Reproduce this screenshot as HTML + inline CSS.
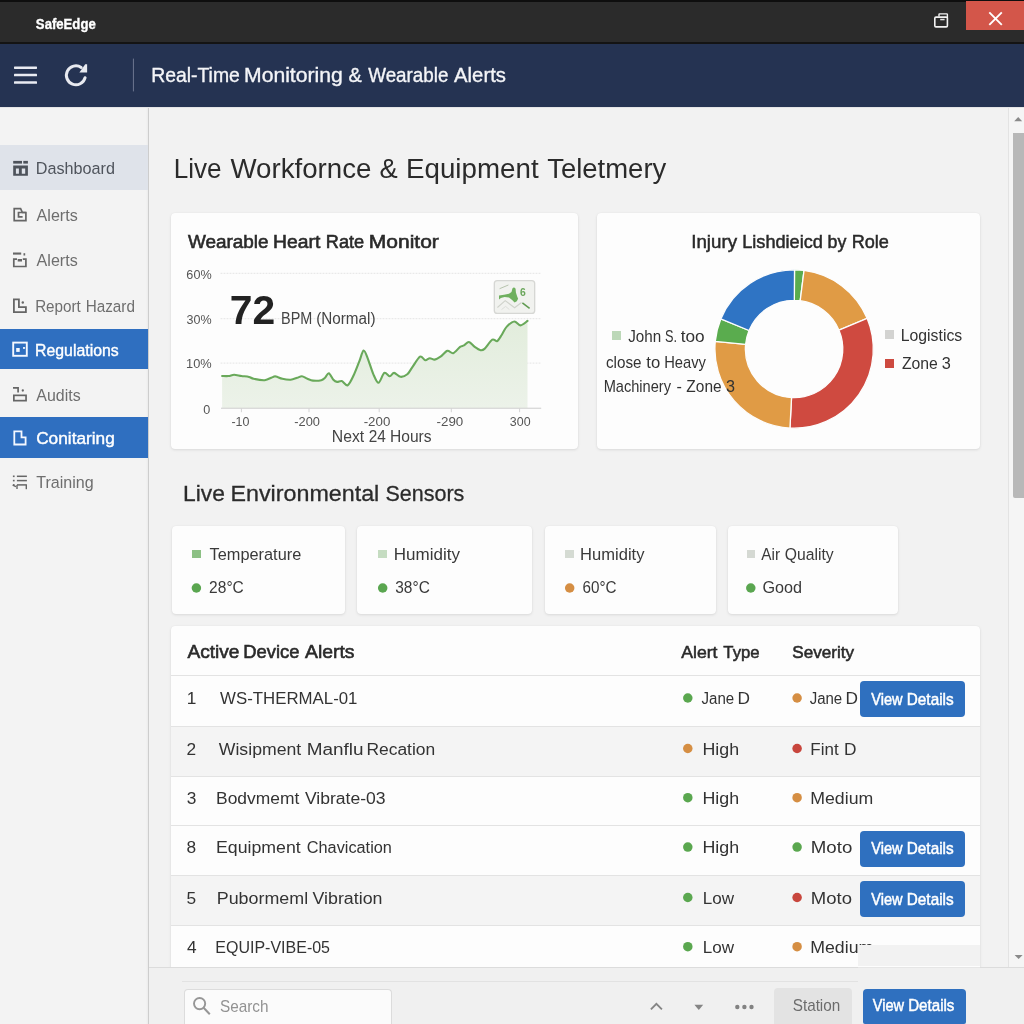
<!DOCTYPE html>
<html><head><meta charset="utf-8"><title>SafeEdge</title>
<style>
html,body{margin:0;padding:0;width:1024px;height:1024px;overflow:hidden;}
body{position:relative;background:#f2f2f2;font-family:"Liberation Sans",sans-serif;}
.t{position:absolute;white-space:nowrap;transform-origin:0 50%;}
.r{position:absolute;}
#tx{position:absolute;left:0;top:0;width:1024px;height:1024px;will-change:transform;}
</style></head><body>
<div class="r" style="left:0.00px;top:0.00px;width:1024.00px;height:1024.00px;background:#f2f2f2;"></div>
<div class="r" style="left:0.00px;top:0.00px;width:1024.00px;height:43.50px;background:#2b2b2b;"></div>
<div class="r" style="left:0.00px;top:0.00px;width:1024.00px;height:1.60px;background:#0e0e0e;"></div>
<div class="r" style="left:0.00px;top:42.20px;width:1024.00px;height:1.60px;background:#141414;"></div>
<div class="r" style="left:965.70px;top:1.20px;width:58.30px;height:29.20px;background:#d3564a;"></div>
<div class="r" style="left:0.00px;top:43.50px;width:1024.00px;height:63.30px;background:#253352;"></div>
<div class="r" style="left:0.00px;top:106.80px;width:148.40px;height:917.20px;background:#f3f3f3;"></div>
<div class="r" style="left:145.60px;top:106.80px;width:2.60px;height:917.20px;background:linear-gradient(to right,rgba(0,0,0,0),rgba(0,0,0,0.035));"></div>
<div class="r" style="left:148.00px;top:106.80px;width:1.10px;height:917.20px;background:#cdcdcd;"></div>
<div class="r" style="left:0.00px;top:106.80px;width:1024.00px;height:1.50px;background:#e4e4e6;"></div>
<div class="r" style="left:0.00px;top:145.30px;width:148.00px;height:44.50px;background:#dfe3ea;"></div>
<div class="r" style="left:0.00px;top:328.80px;width:148.00px;height:39.80px;background:#2f6fc0;"></div>
<div class="r" style="left:0.00px;top:416.90px;width:148.00px;height:41.50px;background:#2f6fc0;"></div>
<div class="r" style="left:1008.40px;top:108.00px;width:1.00px;height:859.00px;background:#e3e3e3;"></div>
<div class="r" style="left:1009.40px;top:108.00px;width:14.60px;height:859.00px;background:#f5f5f5;"></div>
<div class="r" style="left:1013.20px;top:133.10px;width:10.80px;height:364.70px;background:#b8b8b8;border-radius:0 0 0 2px;"></div>
<div class="r" style="left:171.00px;top:213.00px;width:406.70px;height:235.50px;background:#fdfdfd;box-shadow:0 1px 3px rgba(0,0,0,0.10),0 0 1px rgba(0,0,0,0.08);border-radius:4px;"></div>
<div class="r" style="left:597.30px;top:213.00px;width:382.70px;height:235.50px;background:#fdfdfd;box-shadow:0 1px 3px rgba(0,0,0,0.10),0 0 1px rgba(0,0,0,0.08);border-radius:4px;"></div>
<div class="r" style="left:171.70px;top:526.30px;width:173.30px;height:87.30px;background:#fdfdfd;box-shadow:0 1px 3px rgba(0,0,0,0.10),0 0 1px rgba(0,0,0,0.08);border-radius:4px;"></div>
<div class="r" style="left:356.80px;top:526.30px;width:175.60px;height:87.30px;background:#fdfdfd;box-shadow:0 1px 3px rgba(0,0,0,0.10),0 0 1px rgba(0,0,0,0.08);border-radius:4px;"></div>
<div class="r" style="left:545.00px;top:526.30px;width:170.70px;height:87.30px;background:#fdfdfd;box-shadow:0 1px 3px rgba(0,0,0,0.10),0 0 1px rgba(0,0,0,0.08);border-radius:4px;"></div>
<div class="r" style="left:727.60px;top:526.30px;width:170.30px;height:87.30px;background:#fdfdfd;box-shadow:0 1px 3px rgba(0,0,0,0.10),0 0 1px rgba(0,0,0,0.08);border-radius:4px;"></div>
<div class="r" style="left:171.10px;top:626.40px;width:809.00px;height:345.00px;background:#fdfdfd;box-shadow:0 1px 3px rgba(0,0,0,0.10),0 0 1px rgba(0,0,0,0.08);border-radius:4px;"></div>
<div class="r" style="left:171.10px;top:726.00px;width:809.00px;height:50.00px;background:#f4f4f4;"></div>
<div class="r" style="left:171.10px;top:875.00px;width:809.00px;height:50.00px;background:#f4f4f4;"></div>
<div class="r" style="left:171.10px;top:675.00px;width:809.00px;height:1.00px;background:#e3e3e3;"></div>
<div class="r" style="left:171.10px;top:726.00px;width:809.00px;height:1.00px;background:#e3e3e3;"></div>
<div class="r" style="left:171.10px;top:776.00px;width:809.00px;height:1.00px;background:#e3e3e3;"></div>
<div class="r" style="left:171.10px;top:825.00px;width:809.00px;height:1.00px;background:#e3e3e3;"></div>
<div class="r" style="left:171.10px;top:875.00px;width:809.00px;height:1.00px;background:#e3e3e3;"></div>
<div class="r" style="left:171.10px;top:925.00px;width:809.00px;height:1.00px;background:#e3e3e3;"></div>
<div class="r" style="left:149.20px;top:967.20px;width:874.80px;height:56.80px;background:#f0f0f0;"></div>
<div class="r" style="left:149.20px;top:966.50px;width:874.80px;height:1.20px;background:#dcdcdc;"></div>
<div class="r" style="left:182.00px;top:980.60px;width:676.20px;height:1.20px;background:#e2e2e2;"></div>
<div class="r" style="left:184.40px;top:989.40px;width:207.20px;height:34.60px;background:#fbfbfb;border:1px solid #dcdcdc;border-bottom:none;border-radius:4px 4px 0 0;box-sizing:border-box;"></div>
<div class="r" style="left:774.40px;top:987.60px;width:78.00px;height:36.40px;background:#e3e3e3;border-radius:4px 4px 0 0;"></div>
<div class="r" style="left:862.70px;top:989.00px;width:103.50px;height:35.00px;background:#2f70bf;border-radius:4px 4px 2px 2px;"></div>
<svg class="r" style="left:0;top:0;will-change:transform" width="1024" height="1024" viewBox="0 0 1024 1024"><circle cx="196.40" cy="588" r="4.75" fill="#5aa650"/><circle cx="382.70" cy="588" r="4.75" fill="#5aa650"/><circle cx="569.70" cy="588" r="4.75" fill="#d58e43"/><circle cx="750.80" cy="588" r="4.75" fill="#5aa650"/><circle cx="687.80" cy="698.00" r="4.75" fill="#5aa74f"/><circle cx="797.10" cy="698.00" r="4.75" fill="#d58e43"/><circle cx="687.80" cy="748.50" r="4.75" fill="#d58e43"/><circle cx="797.10" cy="748.50" r="4.75" fill="#c8463d"/><circle cx="687.80" cy="797.70" r="4.75" fill="#5aa74f"/><circle cx="797.10" cy="797.70" r="4.75" fill="#d58e43"/><circle cx="687.80" cy="847.10" r="4.75" fill="#5aa74f"/><circle cx="797.10" cy="847.10" r="4.75" fill="#5aa74f"/><circle cx="687.80" cy="897.50" r="4.75" fill="#5aa74f"/><circle cx="797.10" cy="897.50" r="4.75" fill="#c8463d"/><circle cx="687.80" cy="946.70" r="4.75" fill="#5aa74f"/><circle cx="797.10" cy="946.70" r="4.75" fill="#d58e43"/><rect x="14" y="66.45" width="23" height="2.5" rx="0.6" fill="#e9ebf2"/><rect x="14" y="73.85" width="23" height="2.5" rx="0.6" fill="#e9ebf2"/><rect x="14" y="81.35" width="23" height="2.5" rx="0.6" fill="#e9ebf2"/><path d="M81.2 67.4 A9.5 9.5 0 1 0 85.1 77.7" fill="none" stroke="#e8eaf0" stroke-width="3" stroke-linecap="round"/><path d="M79.4 72.4 L87.1 72.4 L87.1 64.3 L85.2 64.3 Z" fill="#e8eaf0"/><rect x="132.9" y="58.6" width="1.1" height="32.8" fill="#66708a"/><rect x="934.8" y="17.1" width="12.6" height="9.8" fill="none" stroke="#f2f2f2" stroke-width="1.6" rx="1.2"/><path d="M939 16.6 V14.3 Q939 13.9 939.6 13.9 H946.6 Q947.4 13.9 947.4 14.6 V18" fill="none" stroke="#f2f2f2" stroke-width="1.4"/><rect x="940.2" y="18.8" width="4.4" height="1.5" fill="#e0e0e0"/><path d="M989.3 12.4 L1001.8 24.8 M1001.8 12.4 L989.3 24.8" stroke="#fff" stroke-width="1.9" fill="none"/><path d="M1014.2 121.3 L1018.2 117 L1022.2 121.3 Z" fill="#8a8a8a"/><path d="M1014.6 954.9 L1018.6 959.1 L1022.6 954.9 Z" fill="#8a8a8a"/><line x1="220.6" y1="273.3" x2="541" y2="273.3" stroke="#e4e4e4" stroke-width="1" stroke-dasharray="1.8 1.2"/><line x1="220.6" y1="318.7" x2="541" y2="318.7" stroke="#e4e4e4" stroke-width="1" stroke-dasharray="1.8 1.2"/><line x1="220.6" y1="363.1" x2="541" y2="363.1" stroke="#e4e4e4" stroke-width="1" stroke-dasharray="1.8 1.2"/><defs><linearGradient id="ag" x1="0" y1="320" x2="0" y2="408" gradientUnits="userSpaceOnUse"><stop offset="0" stop-color="#e2eddc"/><stop offset="1" stop-color="#ecf2e9"/></linearGradient></defs><path d="M222.1 376.0 C223.1 376.0 226.8 376.2 228.6 376.0 C230.4 375.8 232.2 374.7 234.1 374.7 C236.0 374.7 239.3 375.7 241.5 376.0 C243.7 376.3 247.2 376.5 249.0 376.9 C250.8 377.3 251.3 378.3 253.6 378.8 C255.9 379.3 261.8 380.5 264.7 380.2 C267.6 379.9 271.4 377.4 273.1 376.9 C274.8 376.4 274.6 376.2 276.0 376.5 C277.4 376.8 280.2 378.3 282.4 378.8 C284.6 379.3 288.5 379.8 290.7 379.7 C292.9 379.6 295.6 378.3 297.2 377.8 C298.8 377.3 300.4 376.1 301.9 376.2 C303.4 376.3 305.8 378.2 307.4 378.8 C309.0 379.4 311.0 380.4 313.0 380.6 C315.0 380.8 319.5 380.6 321.3 380.2 C323.1 379.8 323.9 378.8 325.0 377.8 C326.1 376.8 327.6 372.9 328.8 373.2 C330.0 373.5 332.2 378.4 333.4 379.7 C334.6 381.0 335.9 381.7 337.1 381.9 C338.3 382.1 340.2 380.5 341.8 381.0 C343.4 381.5 345.9 386.2 347.7 385.3 C349.5 384.4 352.1 378.5 353.8 375.0 C355.5 371.5 358.0 364.7 359.4 361.1 C360.8 357.5 362.4 351.0 363.6 350.6 C364.8 350.2 366.3 354.9 367.7 358.3 C369.1 361.7 371.7 370.5 373.3 374.1 C374.9 377.7 376.9 383.0 378.5 382.8 C380.1 382.6 382.6 373.9 384.3 372.9 C386.0 371.9 388.4 376.2 389.8 376.2 C391.2 376.2 392.5 372.8 394.1 372.9 C395.7 373.0 398.6 376.6 400.5 376.8 C402.4 377.0 405.6 375.7 407.3 374.3 C409.0 372.9 410.3 370.0 412.2 367.4 C414.1 364.8 418.1 357.8 420.0 356.7 C421.9 355.6 423.9 360.0 425.3 360.2 C426.7 360.4 428.4 358.3 429.8 358.2 C431.2 358.1 433.1 359.8 434.7 359.6 C436.3 359.4 438.6 358.0 440.5 356.7 C442.4 355.4 445.5 351.3 447.4 350.8 C449.3 350.3 451.3 353.8 453.2 353.2 C455.1 352.6 458.5 348.0 460.1 346.9 C461.7 345.8 462.7 346.1 464.0 345.4 C465.3 344.7 467.3 341.8 468.9 342.0 C470.5 342.2 473.0 345.7 474.7 346.9 C476.4 348.1 479.2 349.9 480.6 350.2 C482.0 350.5 482.8 350.4 484.5 348.9 C486.2 347.4 490.4 340.8 492.3 339.7 C494.2 338.6 495.9 341.8 497.2 341.1 C498.5 340.4 500.1 337.4 501.5 335.2 C502.9 333.0 505.1 328.4 507.0 326.4 C508.9 324.4 512.4 321.6 514.4 321.5 C516.4 321.4 518.7 325.5 520.6 325.4 C522.5 325.3 526.5 321.6 527.5 320.9 L527.5 408 L222.1 408 Z" fill="url(#ag)"/><path d="M222.1 376.0 C223.1 376.0 226.8 376.2 228.6 376.0 C230.4 375.8 232.2 374.7 234.1 374.7 C236.0 374.7 239.3 375.7 241.5 376.0 C243.7 376.3 247.2 376.5 249.0 376.9 C250.8 377.3 251.3 378.3 253.6 378.8 C255.9 379.3 261.8 380.5 264.7 380.2 C267.6 379.9 271.4 377.4 273.1 376.9 C274.8 376.4 274.6 376.2 276.0 376.5 C277.4 376.8 280.2 378.3 282.4 378.8 C284.6 379.3 288.5 379.8 290.7 379.7 C292.9 379.6 295.6 378.3 297.2 377.8 C298.8 377.3 300.4 376.1 301.9 376.2 C303.4 376.3 305.8 378.2 307.4 378.8 C309.0 379.4 311.0 380.4 313.0 380.6 C315.0 380.8 319.5 380.6 321.3 380.2 C323.1 379.8 323.9 378.8 325.0 377.8 C326.1 376.8 327.6 372.9 328.8 373.2 C330.0 373.5 332.2 378.4 333.4 379.7 C334.6 381.0 335.9 381.7 337.1 381.9 C338.3 382.1 340.2 380.5 341.8 381.0 C343.4 381.5 345.9 386.2 347.7 385.3 C349.5 384.4 352.1 378.5 353.8 375.0 C355.5 371.5 358.0 364.7 359.4 361.1 C360.8 357.5 362.4 351.0 363.6 350.6 C364.8 350.2 366.3 354.9 367.7 358.3 C369.1 361.7 371.7 370.5 373.3 374.1 C374.9 377.7 376.9 383.0 378.5 382.8 C380.1 382.6 382.6 373.9 384.3 372.9 C386.0 371.9 388.4 376.2 389.8 376.2 C391.2 376.2 392.5 372.8 394.1 372.9 C395.7 373.0 398.6 376.6 400.5 376.8 C402.4 377.0 405.6 375.7 407.3 374.3 C409.0 372.9 410.3 370.0 412.2 367.4 C414.1 364.8 418.1 357.8 420.0 356.7 C421.9 355.6 423.9 360.0 425.3 360.2 C426.7 360.4 428.4 358.3 429.8 358.2 C431.2 358.1 433.1 359.8 434.7 359.6 C436.3 359.4 438.6 358.0 440.5 356.7 C442.4 355.4 445.5 351.3 447.4 350.8 C449.3 350.3 451.3 353.8 453.2 353.2 C455.1 352.6 458.5 348.0 460.1 346.9 C461.7 345.8 462.7 346.1 464.0 345.4 C465.3 344.7 467.3 341.8 468.9 342.0 C470.5 342.2 473.0 345.7 474.7 346.9 C476.4 348.1 479.2 349.9 480.6 350.2 C482.0 350.5 482.8 350.4 484.5 348.9 C486.2 347.4 490.4 340.8 492.3 339.7 C494.2 338.6 495.9 341.8 497.2 341.1 C498.5 340.4 500.1 337.4 501.5 335.2 C502.9 333.0 505.1 328.4 507.0 326.4 C508.9 324.4 512.4 321.6 514.4 321.5 C516.4 321.4 518.7 325.5 520.6 325.4 C522.5 325.3 526.5 321.6 527.5 320.9" fill="none" stroke="#69a95a" stroke-width="2.1" stroke-linejoin="round" stroke-linecap="round"/><rect x="221" y="407.7" width="320.2" height="1.1" fill="#d2d2d2"/><rect x="240.9" y="408" width="1" height="4.2" fill="#d4d4d4"/><rect x="308.5" y="408" width="1" height="4.2" fill="#d4d4d4"/><rect x="378.7" y="408" width="1" height="4.2" fill="#d4d4d4"/><rect x="450.8" y="408" width="1" height="4.2" fill="#d4d4d4"/><rect x="519.1" y="408" width="1" height="4.2" fill="#d4d4d4"/><rect x="494.3" y="280.6" width="40.4" height="32.8" rx="3" fill="#f1f2ef" stroke="#d6d7d4" stroke-width="1.3"/><path d="M499 295.6 L504 294.7 L509 293.7 L511.5 291.9 L512.4 288.4 Q514 286.6 515.6 288.7 L515.9 292.5 L517.1 296.2 L518.1 298.7 L516.8 301.2 L514.6 302.5 L512.1 300 L509 297.5 L504.6 296.9 L500.9 298.1 L499 299.4 Z" fill="#6fb05f"/><path d="M497.4 307.5 L505.2 300.6 L514.6 307.8 L521.5 302.5" fill="none" stroke="#cfd2cb" stroke-width="1.1"/><path d="M501.5 309.6 L505.6 306.4 L509.4 309.6" fill="none" stroke="#dcdeda" stroke-width="1"/><path d="M522.4 302.8 L529.6 308.4" stroke="#5f9a50" stroke-width="1.5"/><path d="M499.6 288.7 L508.4 285" stroke="#b7c4ae" stroke-width="1"/><text x="520" y="295.8" font-family="Liberation Sans" font-weight="700" font-size="10.4" fill="#6aa65b">6</text><path d="M794.51 269.80 A79.2 79.2 0 0 1 804.03 270.42 L800.20 300.68 A48.7 48.7 0 0 0 794.35 300.30 Z" fill="#5aac4e" stroke="#fdfdfd" stroke-width="1.3"/><path d="M804.03 270.42 A79.2 79.2 0 0 1 867.11 318.31 L838.99 330.13 A48.7 48.7 0 0 0 800.20 300.68 Z" fill="#e09b45" stroke="#fdfdfd" stroke-width="1.3"/><path d="M867.11 318.31 A79.2 79.2 0 0 1 789.95 428.09 L791.55 397.63 A48.7 48.7 0 0 0 838.99 330.13 Z" fill="#cf4a40" stroke="#fdfdfd" stroke-width="1.3"/><path d="M789.95 428.09 A79.2 79.2 0 0 1 715.26 341.41 L745.62 344.33 A48.7 48.7 0 0 0 791.55 397.63 Z" fill="#e09b45" stroke="#fdfdfd" stroke-width="1.3"/><path d="M715.26 341.41 A79.2 79.2 0 0 1 720.82 318.95 L749.04 330.52 A48.7 48.7 0 0 0 745.62 344.33 Z" fill="#5aac4e" stroke="#fdfdfd" stroke-width="1.3"/><path d="M720.82 318.95 A79.2 79.2 0 0 1 794.51 269.80 L794.35 300.30 A48.7 48.7 0 0 0 749.04 330.52 Z" fill="#2f74c4" stroke="#fdfdfd" stroke-width="1.3"/><rect x="13.2" y="160.9" width="8.8" height="2.7" fill="#4e535b"/><rect x="23.3" y="160.9" width="4.6" height="2.7" fill="#4e535b"/><path fill-rule="evenodd" d="M13.2 165.6 H27.9 V175.8 H13.2 Z M15.9 168.4 V173.8 H18.9 V168.4 Z M21.8 168.4 V173.8 H25.2 V168.4 Z" fill="#4e535b"/><path d="M14.2 208.6 H20.6 L22.4 212.5 H25.9 V220.7 H14.2 Z" fill="none" stroke="#666" stroke-width="1.7"/><path d="M25.9 212.5 H18.5 V216.8 H22.6" fill="none" stroke="#666" stroke-width="1.7"/><rect x="13" y="252.5" width="8.2" height="2.1" fill="#666"/><rect x="23.5" y="253.2" width="1.7" height="2.3" fill="#666"/><path d="M17 259.2 H13.8 V266.5 H25.9 V259.2 H22.8" fill="none" stroke="#666" stroke-width="1.7"/><rect x="17.7" y="259" width="4.3" height="2.5" fill="#666"/><path d="M13.9 299.4 H18.9 V307.2 H25.9 V312.2 H13.9 Z" fill="none" stroke="#666" stroke-width="1.8"/><circle cx="22.8" cy="302.5" r="1.2" fill="#666"/><rect x="13.2" y="342.6" width="13.6" height="13.2" fill="none" stroke="#f4f8ff" stroke-width="1.9"/><rect x="16.2" y="348" width="3.5" height="3.9" fill="#f4f8ff"/><rect x="23" y="347.1" width="2.1" height="1.7" fill="#f4f8ff"/><path d="M13 387.8 H18.1 V392.5" fill="none" stroke="#666" stroke-width="1.7"/><circle cx="22.8" cy="390.5" r="1.15" fill="#666"/><rect x="13.85" y="395.35" width="12.2" height="5.3" fill="none" stroke="#666" stroke-width="1.7"/><path d="M14.3 431.4 H21.5 V437.3 H25.6 V444.5 H14.3 Z" fill="none" stroke="#f4f8ff" stroke-width="1.8"/><rect x="12.9" y="475.5" width="1.7" height="1.6" fill="#666"/><rect x="16.9" y="475.55" width="10" height="1.5" fill="#666"/><rect x="12.9" y="479.8" width="1.7" height="1.6" fill="#666"/><rect x="16.9" y="479.85" width="10" height="1.5" fill="#666"/><rect x="12.9" y="484.09999999999997" width="1.7" height="1.6" fill="#666"/><rect x="16.9" y="484.15" width="10" height="1.5" fill="#666"/><rect x="25.6" y="485" width="1.4" height="4.2" fill="#666"/><rect x="16.3" y="485" width="1.4" height="4" fill="#666"/><rect x="13" y="484.5" width="3.6" height="1.4" fill="#666" transform="rotate(25 13 484.5)"/><path d="M650.9 1009.4 L656.4 1003.9 L661.9 1009.4" fill="none" stroke="#858585" stroke-width="1.9"/><path d="M694.4 1004.7 L703.2 1004.7 L698.8 1009.9 Z" fill="#858585"/><circle cx="737.3" cy="1007" r="2.2" fill="#828282"/><circle cx="744.4" cy="1007" r="2.2" fill="#828282"/><circle cx="751.5" cy="1007" r="2.2" fill="#828282"/><circle cx="199.6" cy="1003.6" r="5.6" fill="none" stroke="#969696" stroke-width="1.9"/><path d="M203.6 1007.8 L209.8 1014.2" stroke="#969696" stroke-width="2"/></svg>
<div id="tx">
<div class="t" style="left:35px;top:17px;font-size:13.8px;line-height:15px;color:#fff;font-weight:700;transform:translateX(0.87px) scaleX(0.9517);-webkit-text-stroke:0.35px #fff;">SafeEdge</div>
<div class="t" style="left:151px;top:64px;font-size:19.9px;line-height:22px;color:#f4f5f8;transform:translateX(0.15px) scaleX(0.9746);-webkit-text-stroke:0.35px #f4f5f8;">Real-Time</div>
<div class="t" style="left:244px;top:64px;font-size:19.9px;line-height:22px;color:#f4f5f8;transform:translateX(0.01px) scaleX(1.0638);-webkit-text-stroke:0.35px #f4f5f8;">Monitoring</div>
<div class="t" style="left:348px;top:64px;font-size:19.9px;line-height:22px;color:#f4f5f8;transform:translateX(0.50px);-webkit-text-stroke:0.35px #f4f5f8;">&amp;</div>
<div class="t" style="left:368px;top:64px;font-size:19.9px;line-height:22px;color:#f4f5f8;transform:translateX(0.25px) scaleX(0.9449);-webkit-text-stroke:0.35px #f4f5f8;">Wearable</div>
<div class="t" style="left:454px;top:64px;font-size:19.9px;line-height:22px;color:#f4f5f8;transform:translateX(0.10px) scaleX(1.0190);-webkit-text-stroke:0.35px #f4f5f8;">Alerts</div>
<div class="t" style="left:35px;top:159px;font-size:16.8px;line-height:19px;color:#4f545c;transform:translateX(0.70px) scaleX(0.9649);">Dashboard</div>
<div class="t" style="left:36px;top:206px;font-size:16.8px;line-height:19px;color:#6e6e6e;transform:translateX(0.60px) scaleX(0.9590);">Alerts</div>
<div class="t" style="left:36px;top:251px;font-size:16.8px;line-height:19px;color:#6e6e6e;transform:translateX(0.60px) scaleX(0.9590);">Alerts</div>
<div class="t" style="left:35px;top:297px;font-size:16.8px;line-height:19px;color:#6e6e6e;transform:translateX(0.13px) scaleX(0.9061);">Report</div>
<div class="t" style="left:85px;top:297px;font-size:16.8px;line-height:19px;color:#6e6e6e;transform:translateX(0.68px) scaleX(0.9107);">Hazard</div>
<div class="t" style="left:35px;top:341px;font-size:16.8px;line-height:19px;color:#fff;transform:translateX(0.08px) scaleX(0.9433);-webkit-text-stroke:0.4px #fff;">Regulations</div>
<div class="t" style="left:36px;top:386px;font-size:16.8px;line-height:19px;color:#6e6e6e;transform:translateX(0.35px) scaleX(0.9487);">Audits</div>
<div class="t" style="left:36px;top:429px;font-size:16.8px;line-height:19px;color:#fff;transform:translateX(0.14px) scaleX(1.0284);-webkit-text-stroke:0.4px #fff;">Conitaring</div>
<div class="t" style="left:36px;top:473px;font-size:16.8px;line-height:19px;color:#6e6e6e;transform:translateX(0.28px) scaleX(0.9571);">Training</div>
<div class="t" style="left:173px;top:153px;font-size:27.3px;line-height:31px;color:#2b2b2b;transform:translateX(0.71px) scaleX(0.9547);">Live</div>
<div class="t" style="left:230px;top:153px;font-size:27.3px;line-height:31px;color:#2b2b2b;transform:translateX(0.40px) scaleX(1.0138);">Workfornce</div>
<div class="t" style="left:379px;top:153px;font-size:27.3px;line-height:31px;color:#2b2b2b;transform:translateX(0.54px);">&amp;</div>
<div class="t" style="left:406px;top:153px;font-size:27.3px;line-height:31px;color:#2b2b2b;transform:translateX(0.03px) scaleX(1.0159);">Equipment</div>
<div class="t" style="left:547px;top:153px;font-size:27.3px;line-height:31px;color:#2b2b2b;transform:translateX(0.25px) scaleX(1.0059);">Teletmery</div>
<div class="t" style="left:187px;top:231px;font-size:18.8px;line-height:21px;color:#2a2a2a;transform:translateX(0.90px) scaleX(1.0077);-webkit-text-stroke:0.6px #2a2a2a;">Wearable</div>
<div class="t" style="left:273px;top:231px;font-size:18.8px;line-height:21px;color:#2a2a2a;transform:translateX(0.05px) scaleX(1.0278);-webkit-text-stroke:0.6px #2a2a2a;">Heart</div>
<div class="t" style="left:325px;top:231px;font-size:18.8px;line-height:21px;color:#2a2a2a;transform:translateX(0.84px) scaleX(0.9676);-webkit-text-stroke:0.6px #2a2a2a;">Rate</div>
<div class="t" style="left:368px;top:231px;font-size:18.8px;line-height:21px;color:#2a2a2a;transform:translateX(0.82px) scaleX(1.1180);-webkit-text-stroke:0.6px #2a2a2a;">Monitor</div>
<div class="t" style="left:691px;top:231px;font-size:18.6px;line-height:21px;color:#2a2a2a;transform:translateX(0.21px) scaleX(1.0068);-webkit-text-stroke:0.5px #2a2a2a;">Injury</div>
<div class="t" style="left:742px;top:231px;font-size:18.6px;line-height:21px;color:#2a2a2a;transform:translateX(0.20px) scaleX(0.9760);-webkit-text-stroke:0.5px #2a2a2a;">Lishdieicd</div>
<div class="t" style="left:827px;top:231px;font-size:18.6px;line-height:21px;color:#2a2a2a;transform:translateX(0.53px) scaleX(0.9564);-webkit-text-stroke:0.5px #2a2a2a;">by</div>
<div class="t" style="left:851px;top:231px;font-size:18.6px;line-height:21px;color:#2a2a2a;transform:translateX(0.65px) scaleX(0.9752);-webkit-text-stroke:0.5px #2a2a2a;">Role</div>
<div class="t" style="left:186px;top:267px;font-size:12.8px;line-height:15px;color:#555;transform:translateX(0.37px) scaleX(0.9873);">60%</div>
<div class="t" style="left:186px;top:312px;font-size:12.8px;line-height:15px;color:#555;transform:translateX(0.56px) scaleX(0.9796);">30%</div>
<div class="t" style="left:186px;top:356px;font-size:12.8px;line-height:15px;color:#555;transform:translateX(0.04px);">10%</div>
<div class="t" style="left:203px;top:403px;font-size:12.6px;line-height:14px;color:#555;transform:translateX(0.31px);">0</div>
<div class="t" style="left:231px;top:415px;font-size:12.4px;line-height:14px;color:#555;transform:translateX(0.45px) scaleX(1.0066);">-10</div>
<div class="t" style="left:294px;top:415px;font-size:12.4px;line-height:14px;color:#555;transform:translateX(0.34px) scaleX(1.0348);">-200</div>
<div class="t" style="left:363px;top:415px;font-size:12.4px;line-height:14px;color:#555;transform:translateX(0.67px) scaleX(1.0725);">-200</div>
<div class="t" style="left:436px;top:415px;font-size:12.4px;line-height:14px;color:#555;transform:translateX(0.57px) scaleX(1.0767);">-290</div>
<div class="t" style="left:509px;top:415px;font-size:12.4px;line-height:14px;color:#555;transform:translateX(0.87px);">300</div>
<div class="t" style="left:229px;top:287px;font-size:40.8px;line-height:46px;color:#222;font-weight:700;transform:translateX(0.77px);">7</div>
<div class="t" style="left:252px;top:287px;font-size:40.8px;line-height:46px;color:#222;font-weight:700;transform:translateX(0.38px);">2</div>
<div class="t" style="left:281px;top:310px;font-size:15.6px;line-height:17px;color:#444;transform:translateX(0.05px) scaleX(0.9249);">BPM</div>
<div class="t" style="left:316px;top:310px;font-size:15.6px;line-height:17px;color:#444;transform:translateX(0.18px) scaleX(0.9777);">(Normal)</div>
<div class="t" style="left:331px;top:428px;font-size:15.8px;line-height:17px;color:#444;transform:translateX(0.84px) scaleX(0.9966);">Next</div>
<div class="t" style="left:368px;top:428px;font-size:15.8px;line-height:17px;color:#444;transform:translateX(0.73px) scaleX(0.9723);">24</div>
<div class="t" style="left:390px;top:428px;font-size:15.8px;line-height:17px;color:#444;transform:translateX(0.05px) scaleX(0.9859);">Hours</div>
<div class="t" style="left:628px;top:327px;font-size:16.2px;line-height:18px;color:#333;transform:translateX(0.17px) scaleX(0.9392);">John</div>
<div class="t" style="left:665px;top:327px;font-size:16.2px;line-height:18px;color:#333;transform:translateX(0.03px) scaleX(0.7849);">S.</div>
<div class="t" style="left:680px;top:327px;font-size:16.2px;line-height:18px;color:#333;transform:translateX(0.64px) scaleX(1.0635);">too</div>
<div class="t" style="left:605px;top:353px;font-size:16.2px;line-height:18px;color:#333;transform:translateX(0.99px) scaleX(0.9417);">close</div>
<div class="t" style="left:646px;top:353px;font-size:16.2px;line-height:18px;color:#333;transform:translateX(0.25px) scaleX(1.0288);">to</div>
<div class="t" style="left:664px;top:353px;font-size:16.2px;line-height:18px;color:#333;transform:translateX(0.22px) scaleX(0.9097);">Heavy</div>
<div class="t" style="left:603px;top:377px;font-size:16.2px;line-height:18px;color:#333;transform:translateX(0.63px) scaleX(0.9024);">Machinery</div>
<div class="t" style="left:676px;top:377px;font-size:16.2px;line-height:18px;color:#333;transform:translateX(0.55px);">-</div>
<div class="t" style="left:686px;top:377px;font-size:16.2px;line-height:18px;color:#333;transform:translateX(0.34px) scaleX(0.9553);">Zone</div>
<div class="t" style="left:725px;top:377px;font-size:16.2px;line-height:18px;color:#333;transform:translateX(0.93px);">3</div>
<div class="t" style="left:900px;top:326px;font-size:16.3px;line-height:18px;color:#333;transform:translateX(0.73px) scaleX(0.9702);">Logistics</div>
<div class="t" style="left:901px;top:354px;font-size:16.3px;line-height:18px;color:#333;transform:translateX(0.93px) scaleX(0.9688);">Zone</div>
<div class="t" style="left:941px;top:354px;font-size:16.3px;line-height:18px;color:#333;transform:translateX(0.83px);">3</div>
<div class="r" style="left:611.60px;top:330.70px;width:9.50px;height:9.20px;background:#bcd8b8;"></div>
<div class="r" style="left:885.30px;top:330.40px;width:9.10px;height:8.80px;background:#d3d3d1;"></div>
<div class="r" style="left:885.30px;top:359.30px;width:9.10px;height:8.80px;background:#cd4a40;"></div>
<div class="t" style="left:183px;top:480px;font-size:22.8px;line-height:26px;color:#2b2b2b;transform:translateX(0.08px);-webkit-text-stroke:0.3px #2b2b2b;">Live</div>
<div class="t" style="left:230px;top:480px;font-size:22.8px;line-height:26px;color:#2b2b2b;transform:translateX(0.54px) scaleX(1.0204);-webkit-text-stroke:0.3px #2b2b2b;">Environmental</div>
<div class="t" style="left:385px;top:480px;font-size:22.8px;line-height:26px;color:#2b2b2b;transform:translateX(0.53px) scaleX(0.9419);-webkit-text-stroke:0.3px #2b2b2b;">Sensors</div>
<div class="r" style="left:192.10px;top:549.60px;width:8.70px;height:8.60px;background:#8cc084;"></div>
<div class="t" style="left:209px;top:545px;font-size:16.8px;line-height:19px;color:#3a3a3a;transform:translateX(0.57px) scaleX(0.9730);">Temperature</div>
<div class="t" style="left:209px;top:578px;font-size:16.4px;line-height:18px;color:#3a3a3a;transform:translateX(0.12px) scaleX(0.9466);">28°C</div>
<div class="r" style="left:378.40px;top:549.60px;width:8.70px;height:8.60px;background:#c5dcc1;"></div>
<div class="t" style="left:393px;top:545px;font-size:16.8px;line-height:19px;color:#3a3a3a;transform:translateX(0.74px) scaleX(1.0139);">Humidity</div>
<div class="t" style="left:395px;top:578px;font-size:16.4px;line-height:18px;color:#3a3a3a;transform:translateX(0.26px) scaleX(0.9429);">38°C</div>
<div class="r" style="left:565.40px;top:549.60px;width:8.70px;height:8.60px;background:#d5dbd3;"></div>
<div class="t" style="left:580px;top:545px;font-size:16.8px;line-height:19px;color:#3a3a3a;transform:translateX(0.08px) scaleX(0.9858);">Humidity</div>
<div class="t" style="left:582px;top:578px;font-size:16.4px;line-height:18px;color:#3a3a3a;transform:translateX(0.44px) scaleX(0.9296);">60°C</div>
<div class="r" style="left:746.50px;top:549.60px;width:8.70px;height:8.60px;background:#d5d9d3;"></div>
<div class="t" style="left:761px;top:545px;font-size:16.8px;line-height:19px;color:#3a3a3a;transform:translateX(0.30px) scaleX(0.9150);">Air</div>
<div class="t" style="left:784px;top:545px;font-size:16.8px;line-height:19px;color:#3a3a3a;transform:translateX(0.79px) scaleX(0.9361);">Quality</div>
<div class="t" style="left:762px;top:578px;font-size:16.4px;line-height:18px;color:#3a3a3a;transform:translateX(0.39px) scaleX(0.9871);">Good</div>
<div class="t" style="left:187px;top:641px;font-size:18.6px;line-height:21px;color:#2a2a2a;transform:translateX(0.40px) scaleX(1.0271);-webkit-text-stroke:0.6px #2a2a2a;">Active</div>
<div class="t" style="left:243px;top:641px;font-size:18.6px;line-height:21px;color:#2a2a2a;transform:translateX(0.33px) scaleX(0.9883);-webkit-text-stroke:0.6px #2a2a2a;">Device</div>
<div class="t" style="left:305px;top:641px;font-size:18.6px;line-height:21px;color:#2a2a2a;transform:translateX(0.00px) scaleX(1.0411);-webkit-text-stroke:0.6px #2a2a2a;">Alerts</div>
<div class="t" style="left:681px;top:642px;font-size:17.4px;line-height:20px;color:#2a2a2a;transform:translateX(0.30px) scaleX(1.0124);-webkit-text-stroke:0.55px #2a2a2a;">Alert</div>
<div class="t" style="left:723px;top:642px;font-size:17.4px;line-height:20px;color:#2a2a2a;transform:translateX(0.37px) scaleX(0.9610);-webkit-text-stroke:0.55px #2a2a2a;">Type</div>
<div class="t" style="left:792px;top:642px;font-size:17.4px;line-height:20px;color:#2a2a2a;transform:translateX(0.23px) scaleX(0.9834);-webkit-text-stroke:0.55px #2a2a2a;">Severity</div>
<div class="t" style="left:186px;top:688px;font-size:17.3px;line-height:20px;color:#333;transform:translateX(0.70px);">1</div>
<div class="t" style="left:220px;top:688px;font-size:17.3px;line-height:20px;color:#333;transform:translateX(0.10px) scaleX(0.9731);">WS-THERMAL-01</div>
<div class="t" style="left:701px;top:688px;font-size:17.3px;line-height:20px;color:#333;transform:translateX(0.57px) scaleX(0.8712);">Jane</div>
<div class="t" style="left:737px;top:688px;font-size:17.3px;line-height:20px;color:#333;transform:translateX(0.62px);">D</div>
<div class="t" style="left:809px;top:688px;font-size:17.3px;line-height:20px;color:#333;transform:translateX(0.67px) scaleX(0.8684);">Jane</div>
<div class="t" style="left:845px;top:688px;font-size:17.3px;line-height:20px;color:#333;transform:translateX(0.52px);">D</div>
<div class="t" style="left:186px;top:739px;font-size:17.3px;line-height:20px;color:#333;transform:translateX(0.44px);">2</div>
<div class="t" style="left:218px;top:739px;font-size:17.3px;line-height:20px;color:#333;transform:translateX(0.75px) scaleX(1.0229);">Wisipment</div>
<div class="t" style="left:306px;top:739px;font-size:17.3px;line-height:20px;color:#333;transform:translateX(0.68px) scaleX(1.0953);">Manflu</div>
<div class="t" style="left:366px;top:739px;font-size:17.3px;line-height:20px;color:#333;transform:translateX(0.40px) scaleX(1.0087);">Recation</div>
<div class="t" style="left:702px;top:739px;font-size:17.3px;line-height:20px;color:#333;transform:translateX(0.47px) scaleX(1.0323);">High</div>
<div class="t" style="left:810px;top:739px;font-size:17.3px;line-height:20px;color:#333;transform:translateX(0.34px) scaleX(0.9810);">Fint</div>
<div class="t" style="left:844px;top:739px;font-size:17.3px;line-height:20px;color:#333;transform:translateX(0.02px);">D</div>
<div class="t" style="left:186px;top:788px;font-size:17.3px;line-height:20px;color:#333;transform:translateX(0.69px);">3</div>
<div class="t" style="left:216px;top:788px;font-size:17.3px;line-height:20px;color:#333;transform:translateX(0.06px) scaleX(1.0077);">Bodvmemt</div>
<div class="t" style="left:304px;top:788px;font-size:17.3px;line-height:20px;color:#333;transform:translateX(0.90px) scaleX(1.0165);">Vibrate-03</div>
<div class="t" style="left:702px;top:788px;font-size:17.3px;line-height:20px;color:#333;transform:translateX(0.47px) scaleX(1.0323);">High</div>
<div class="t" style="left:810px;top:788px;font-size:17.3px;line-height:20px;color:#333;transform:translateX(0.28px) scaleX(1.0240);">Medium</div>
<div class="t" style="left:186px;top:837px;font-size:17.3px;line-height:20px;color:#333;transform:translateX(0.61px);">8</div>
<div class="t" style="left:215px;top:837px;font-size:17.3px;line-height:20px;color:#333;transform:translateX(0.98px) scaleX(1.0257);">Equipment</div>
<div class="t" style="left:306px;top:837px;font-size:17.3px;line-height:20px;color:#333;transform:translateX(0.78px) scaleX(0.9425);">Chavication</div>
<div class="t" style="left:702px;top:837px;font-size:17.3px;line-height:20px;color:#333;transform:translateX(0.47px) scaleX(1.0323);">High</div>
<div class="t" style="left:810px;top:837px;font-size:17.3px;line-height:20px;color:#333;transform:translateX(0.81px) scaleX(1.0790);">Moto</div>
<div class="t" style="left:186px;top:888px;font-size:17.3px;line-height:20px;color:#333;transform:translateX(0.61px);">5</div>
<div class="t" style="left:216px;top:888px;font-size:17.3px;line-height:20px;color:#333;transform:translateX(0.77px) scaleX(1.0339);">Pubormeml</div>
<div class="t" style="left:312px;top:888px;font-size:17.3px;line-height:20px;color:#333;transform:translateX(0.50px) scaleX(1.0306);">Vibration</div>
<div class="t" style="left:702px;top:888px;font-size:17.3px;line-height:20px;color:#333;transform:translateX(0.83px) scaleX(0.9881);">Low</div>
<div class="t" style="left:810px;top:888px;font-size:17.3px;line-height:20px;color:#333;transform:translateX(0.82px) scaleX(1.0707);">Moto</div>
<div class="t" style="left:186px;top:937px;font-size:17.3px;line-height:20px;color:#333;transform:translateX(0.95px);">4</div>
<div class="t" style="left:215px;top:937px;font-size:17.3px;line-height:20px;color:#333;transform:translateX(0.32px) scaleX(0.9257);">EQUIP-VIBE-05</div>
<div class="t" style="left:702px;top:937px;font-size:17.3px;line-height:20px;color:#333;transform:translateX(0.83px) scaleX(0.9881);">Low</div>
<div class="t" style="left:810px;top:937px;font-size:17.3px;line-height:20px;color:#333;transform:translateX(0.28px) scaleX(1.0240);">Medium</div>
<div class="r" style="left:858.30px;top:944.60px;width:122.20px;height:21.90px;background:#f2f2f2;"></div>
<div class="r" style="left:858.30px;top:966.50px;width:122.20px;height:1.20px;background:#e6e6e6;"></div>
<div class="r" style="left:859.80px;top:681.20px;width:105.40px;height:36.30px;background:#2f70bf;border-radius:4px;"></div>
<div class="t" style="left:871px;top:691px;font-size:15.9px;line-height:17px;color:#fff;transform:translateX(0.30px) scaleX(0.9156);-webkit-text-stroke:0.5px #fff;">View</div>
<div class="t" style="left:906px;top:691px;font-size:15.9px;line-height:17px;color:#fff;transform:translateX(0.77px) scaleX(0.9648);-webkit-text-stroke:0.5px #fff;">Details</div>
<div class="r" style="left:859.80px;top:830.70px;width:105.40px;height:36.30px;background:#2f70bf;border-radius:4px;"></div>
<div class="t" style="left:871px;top:840px;font-size:15.9px;line-height:17px;color:#fff;transform:translateX(0.30px) scaleX(0.9156);-webkit-text-stroke:0.5px #fff;">View</div>
<div class="t" style="left:906px;top:840px;font-size:15.9px;line-height:17px;color:#fff;transform:translateX(0.77px) scaleX(0.9648);-webkit-text-stroke:0.5px #fff;">Details</div>
<div class="r" style="left:859.80px;top:881.10px;width:105.40px;height:36.30px;background:#2f70bf;border-radius:4px;"></div>
<div class="t" style="left:871px;top:891px;font-size:15.9px;line-height:17px;color:#fff;transform:translateX(0.30px) scaleX(0.9156);-webkit-text-stroke:0.5px #fff;">View</div>
<div class="t" style="left:906px;top:891px;font-size:15.9px;line-height:17px;color:#fff;transform:translateX(0.77px) scaleX(0.9648);-webkit-text-stroke:0.5px #fff;">Details</div>
<div class="t" style="left:872px;top:996px;font-size:16.3px;line-height:18px;color:#fff;transform:translateX(0.80px) scaleX(0.8931);-webkit-text-stroke:0.5px #fff;">View</div>
<div class="t" style="left:908px;top:996px;font-size:16.3px;line-height:18px;color:#fff;transform:translateX(0.19px) scaleX(0.9286);-webkit-text-stroke:0.5px #fff;">Details</div>
<div class="t" style="left:792px;top:996px;font-size:16.6px;line-height:19px;color:#6c6c6c;transform:translateX(0.71px) scaleX(0.9202);">Station</div>
<div class="t" style="left:219px;top:997px;font-size:17px;line-height:19px;color:#929292;transform:translateX(0.91px) scaleX(0.9016);">Search</div>
</div>
</body></html>
